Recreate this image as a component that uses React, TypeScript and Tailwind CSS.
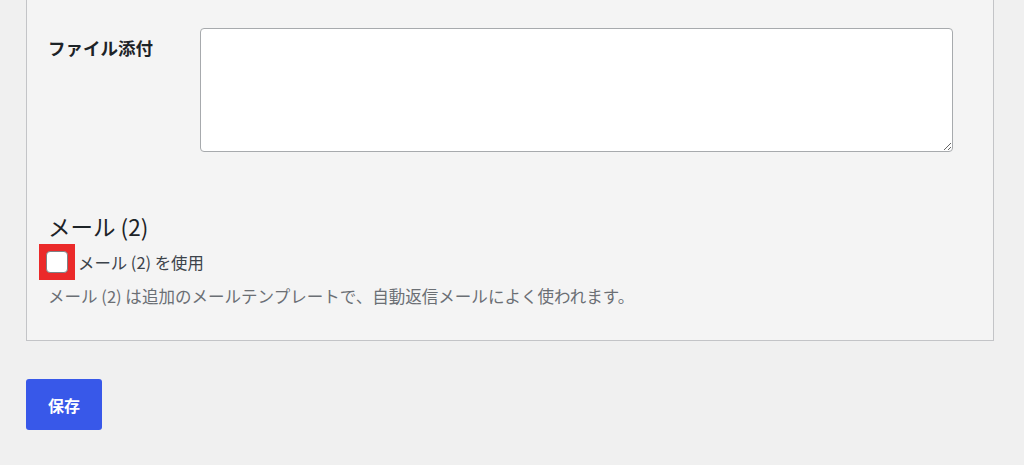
import React from 'react'

const App: React.FC = () => {
    return (
        <div
            className="min-h-[465px] w-full bg-[#f0f0f0] text-[#1d2327]"
            style={{ fontFamily: '"Noto Sans CJK JP", "Noto Sans", sans-serif' }}
        >
            <section className="ml-[26px] w-[968px] border-x border-b border-[#c3c4c7] bg-[#f4f4f4] pl-[21px] pr-[40px] pt-[28px] pb-[32px]">
                <div className="flex items-start">
                    <label className="mt-[6px] w-[152px] shrink-0 text-[17.5px] font-bold leading-[28px]">
                        ファイル添付
                    </label>
                    <textarea className="h-[124px] flex-1 rounded-[4px] border border-[#a7aaad] bg-white" />
                </div>

                <h2 className="mt-[59px] text-[22.5px] leading-[30px] font-normal">
                    メール (2)
                </h2>
                <label className="mt-[3px] flex items-center gap-[3px] text-[16.4px] leading-[36px]">
                    <span className="ml-[-9px] flex h-[36px] w-[36px] items-center justify-center bg-[#eb2a2a]">
                        <input
                            type="checkbox"
                            className="h-[22px] w-[22px] appearance-none rounded-[4px] border border-[#7e8185] bg-white"
                        />
                    </span>
                    <span className="text-[#3c434a]">メール (2) を使用</span>
                </label>
                <p className="mt-[4px] text-[16.55px] leading-[24px] text-[#6b6f74]">
                    メール (2) は追加のメールテンプレートで、自動返信メールによく使われます。
                </p>
            </section>

            <div className="ml-[26px] mt-[38px]">
                <button className="h-[51px] w-[76px] rounded-[3px] bg-[#3858e9] text-[16px] font-bold text-white">
                    保存
                </button>
            </div>
        </div>
    )
}

export default App
